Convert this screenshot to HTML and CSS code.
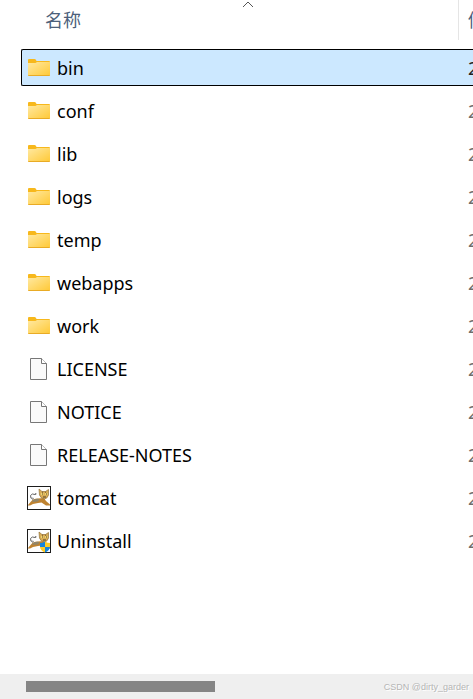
FILE: index.html
```html
<!DOCTYPE html>
<html lang="zh-CN">
<head>
<meta charset="utf-8">
<meta name="viewport" content="width=device-width, initial-scale=1">
<title>tomcat</title>
<link rel="stylesheet" href="styles.css">
</head>
<body>
<svg class="defs" aria-hidden="true">
  <defs>
    <linearGradient id="paper" x1="0" y1="0" x2="1" y2="1">
      <stop offset="0" stop-color="#ffe9a2"/>
      <stop offset="1" stop-color="#ffc937"/>
    </linearGradient>
    <symbol id="folder" viewBox="0 0 24 24">
      <path d="M1 4Q1 3 2 3H7.500Q8.500 3 9 4L9.500 5H22Q23 5 23 6V19H1Z" fill="#f7b81c"/>
      <path d="M1 7H8.500L10 6H23V19.500H1Z" fill="url(#paper)"/>
      <path d="M1 19H23Q23 20 22 20H2Q1 20 1 19Z" fill="#e9ab25"/>
    </symbol>
    <symbol id="file" viewBox="0 0 24 24">
      <path d="M3.500 1.500H14.500L19.500 6.500V22.500H3.500Z" fill="#fafafa" stroke="#777" stroke-width="1"/>
      <path d="M14.500 1.500V6.500H19.500" fill="#fff" stroke="#777" stroke-width="1"/>
    </symbol>
    <symbol id="cat" viewBox="0 0 24 24">
      <rect x=".5" y=".5" width="23" height="23" fill="#fff" stroke="#1c1c1c"/>
      <path d="M6 13.500Q3 12 3.500 9.500Q5 7 8 8.500Q10 8.500 8.500 7" fill="none" stroke="#666" stroke-width="1"/>
      <path d="M3 11.500L7 12.500" fill="none" stroke="#999" stroke-width="1"/>
      <path d="M1 19L4 15.500Q6 12.500 11 12.500L17 12L19 15L23 18.500V19.500H19L14.500 16.500L11 17L6 18L3 19.500H1Z" fill="#bf8330"/>
      <path d="M6 14Q9 12 12.500 13L11 15.500L5 16Z" fill="#91866a"/>
      <path d="M12 3L15 5.500H18.500L21.500 3.500L21.500 9Q20.500 12.500 17.500 13Q13.500 12.500 12.500 9Z" fill="#d8ad55" stroke="#94723b" stroke-width=".7"/>
      <path d="M14 8H16.500M18 8H20.500" stroke="#f6e27a" stroke-width="1.500"/>
      <path d="M15 8H16M19 8H20M16 11H19" stroke="#55402a" stroke-width="1"/>
      <path d="M15.500 5.500V7M18.500 5.500V7" stroke="#755325" stroke-width=".7"/>
    </symbol>
    <symbol id="shield" viewBox="0 0 24 24">
      <path d="M18 12.500Q15.500 14 13 14V18H18Z" fill="#1686dc"/>
      <path d="M18 12.500Q20.500 14 23 14V18H18Z" fill="#ffcc25"/>
      <path d="M13 18H18V23.500Q13.500 21.500 13 18Z" fill="#ffcc25"/>
      <path d="M18 18H23Q22.500 21.500 18 23.500Z" fill="#1686dc"/>
    </symbol>
  </defs>
</svg>
<main class="explorer">
  <table class="files">
    <thead>
      <tr class="head">
        <th class="name" aria-sort="ascending">名称<svg class="sort" viewBox="0 0 12 7" aria-hidden="true"><path d="M1 6L6 1L11 6" fill="none" stroke="#555" stroke-width="1"/></svg></th>
        <th class="date">修</th>
      </tr>
    </thead>
    <tbody>
      <tr class="row selected"><td class="name"><svg class="icon" aria-hidden="true"><use href="#folder"/></svg>bin</td><td class="date">2</td></tr>
      <tr class="row"><td class="name"><svg class="icon" aria-hidden="true"><use href="#folder"/></svg>conf</td><td class="date">2</td></tr>
      <tr class="row"><td class="name"><svg class="icon" aria-hidden="true"><use href="#folder"/></svg>lib</td><td class="date">2</td></tr>
      <tr class="row"><td class="name"><svg class="icon" aria-hidden="true"><use href="#folder"/></svg>logs</td><td class="date">2</td></tr>
      <tr class="row"><td class="name"><svg class="icon" aria-hidden="true"><use href="#folder"/></svg>temp</td><td class="date">2</td></tr>
      <tr class="row"><td class="name"><svg class="icon" aria-hidden="true"><use href="#folder"/></svg>webapps</td><td class="date">2</td></tr>
      <tr class="row"><td class="name"><svg class="icon" aria-hidden="true"><use href="#folder"/></svg>work</td><td class="date">2</td></tr>
      <tr class="row"><td class="name"><svg class="icon" aria-hidden="true"><use href="#file"/></svg>LICENSE</td><td class="date">2</td></tr>
      <tr class="row"><td class="name"><svg class="icon" aria-hidden="true"><use href="#file"/></svg>NOTICE</td><td class="date">2</td></tr>
      <tr class="row"><td class="name"><svg class="icon" aria-hidden="true"><use href="#file"/></svg>RELEASE-NOTES</td><td class="date">2</td></tr>
      <tr class="row"><td class="name"><svg class="icon" aria-hidden="true"><use href="#cat"/></svg>tomcat</td><td class="date">2</td></tr>
      <tr class="row"><td class="name"><svg class="icon" aria-hidden="true"><use href="#cat"/><use href="#shield"/></svg>Uninstall</td><td class="date">2</td></tr>
    </tbody>
  </table>
  <footer class="scrollbar">
    <div class="thumb"></div>
    <span class="credit">CSDN @dirty_garder</span>
  </footer>
</main>
</body>
</html>
```

FILE: styles.css
```css
* {
  box-sizing: border-box;
}

body {
  margin: 0;
  background: #fff;
  color: #000;
  font: 18px/24px "Noto Sans", "Noto Sans CJK SC", sans-serif;
}

.defs {
  position: absolute;
  width: 0;
  height: 0;
}

.explorer {
  display: flex;
  flex-direction: column;
  min-height: 100vh;
  overflow: hidden;
}

.files {
  display: block;
  flex: 1;
  padding-left: 21px;
}

thead {
  display: block;
}

tbody {
  display: flex;
  flex-direction: column;
  gap: 6px;
  margin-top: 9px;
}

.head,
.row {
  display: flex;
}

th,
td {
  padding: 0;
}

.head {
  height: 40px;
  color: #4c607a;
}

.head th {
  display: flex;
  align-items: center;
  font-weight: 400;
}

.head .name {
  position: relative;
  padding-left: 24px;
  border-right: 1px solid #e5e5e5;
}

.sort {
  position: absolute;
  top: 1px;
  left: 52%;
  width: 12px;
  height: 7px;
  transform: translateX(-50%);
}

.row {
  height: 37px;
  align-items: center;
  border: 1px solid transparent;
  border-right: 0;
  border-radius: 2px 0 0 2px;
}

.selected {
  border-color: #000;
  background: #cce8ff;
}

.name {
  flex: 1;
}

.row .name {
  display: flex;
  align-items: center;
  gap: 6px;
  padding-left: 5px;
}

.date {
  flex: none;
  width: 14px;
  padding-left: 9px;
  overflow: hidden;
  white-space: nowrap;
}

.row .date {
  color: #6d6d6d;
}

.selected .date {
  color: #222;
}

.icon {
  flex: none;
  width: 24px;
  height: 24px;
}

.scrollbar {
  display: flex;
  align-items: center;
  justify-content: space-between;
  height: 25px;
  padding: 0 4px 0 26px;
  background: #efefef;
}

.thumb {
  width: 43%;
  max-width: 189px;
  height: 11px;
  background: #858585;
}

.credit {
  color: #b5b5b5;
  font: 9px/12px "Liberation Sans", sans-serif;
  text-shadow: 1px 1px 0 #fff;
}
```
